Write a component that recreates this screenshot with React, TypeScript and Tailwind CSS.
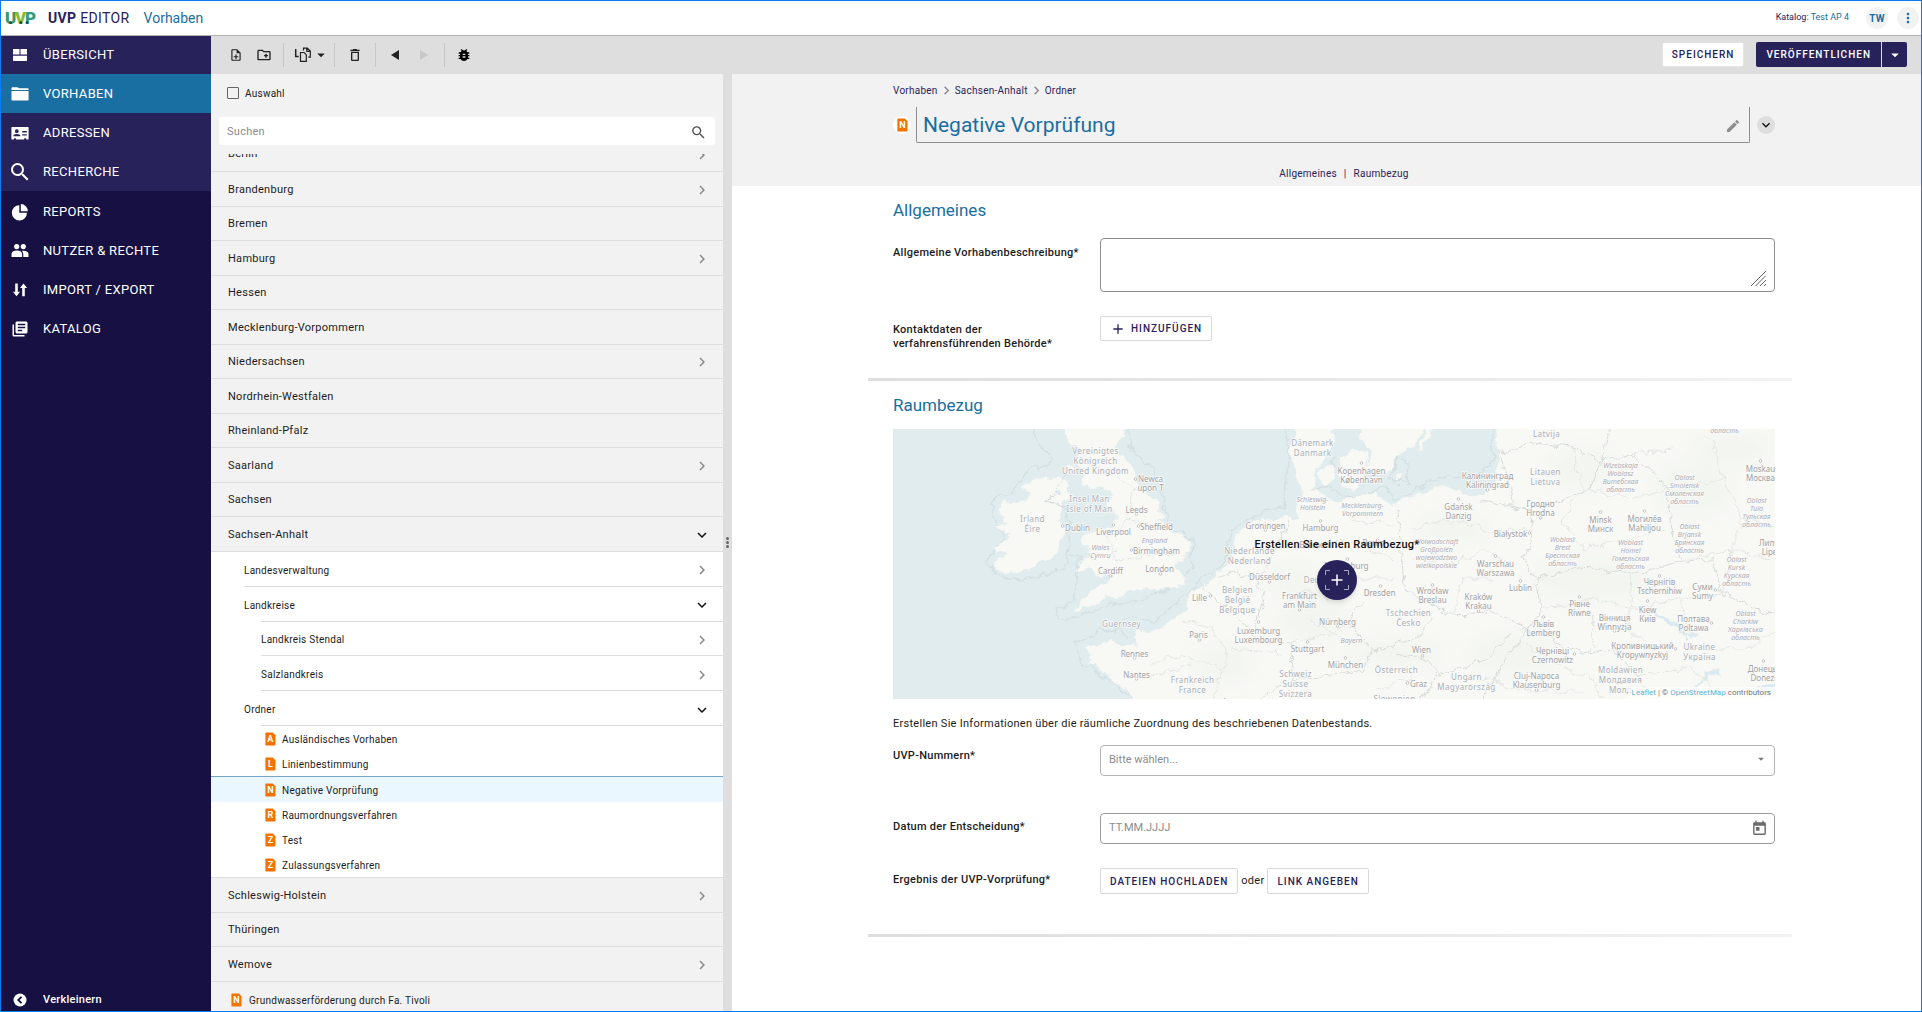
import React from "react";
import {
  MdOutlineNoteAdd,
  MdOutlineCreateNewFolder,
  MdOutlineDelete,
  MdBugReport,
  MdArrowDropDown,
  MdSearch,
  MdLibraryBooks,
  MdEdit,
  MdAdd,
  MdMoreVert,
  MdToday,
  MdChevronRight,
  MdExpandMore,
} from "react-icons/md";

type IconProps = { className?: string };

const DashboardIcon = ({ className }: IconProps) => (
  <svg viewBox="0 0 18 18" className={className} fill="currentColor" aria-hidden="true">
    <path d="M2 3h6.5v5.5H2zM9.500 3H16v5.500H9.500zM2 9.800h14V15H2z" />
  </svg>
);

const FolderIcon = ({ className }: IconProps) => (
  <svg viewBox="0 0 18 18" className={className} fill="currentColor" aria-hidden="true">
    <path d="M.5 4.500V3q0-.8.8-.8h5.200L8 3.300h9q.6 0 .6.8v.9H.5z" />
    <path d="M.5 5.900h17.100v8.800q0 .8-.8.8H1.300q-.8 0-.8-.8z" />
  </svg>
);

const ContactIcon = ({ className }: IconProps) => (
  <svg viewBox="0 0 18 18" className={className} fill="currentColor" aria-hidden="true">
    <path
      fillRule="evenodd"
      d="M1 3h16q.6 0 .6.6v11.300q0 .6-.6.600h-1.500l-.5-1.200h-1.500l-.5 1.200H5.200l-.5-1.200H3.200l-.5 1.200H1q-.6 0-.6-.6V3.600Q.4 3 1 3zm4.800 2.300a1.900 1.900 0 100 3.800 1.900 1.900 0 000-3.800zM2.400 12.300h6.900v-.6q0-1.700-3.500-1.700t-3.400 1.700zM11.200 7v1.400h4.600V7zm0 3.200v1.400h4.600v-1.400z"
    />
  </svg>
);

const PieIcon = ({ className }: IconProps) => (
  <svg viewBox="0 0 18 18" className={className} fill="currentColor" aria-hidden="true">
    <path d="M8.300 2.200v7.600h7.700A7.600 7.600 0 118.300 2.200z" />
    <path d="M9.800 1v7.200h7A7.200 7.200 0 009.800 1z" />
  </svg>
);

const PeopleIcon = ({ className }: IconProps) => (
  <svg viewBox="0 0 18 18" className={className} fill="currentColor" aria-hidden="true">
    <circle cx="5.700" cy="4.600" r="2.600" />
    <circle cx="12.300" cy="4.600" r="2.600" />
    <path d="M.5 15v-2.600Q.500 8.600 5.800 8.600t5.300 3.800V15z" />
    <path d="M12.300 15v-2.800q0-2-1.400-3.500 6.600-.5 6.600 3.600V15z" />
  </svg>
);

const TransferIcon = ({ className }: IconProps) => (
  <svg viewBox="0 0 18 18" className={className} fill="currentColor" aria-hidden="true">
    <path d="M4.200 2.500h2.600v8.300H9L5.500 15.300 2 10.800h2.200zM11.200 15.300h2.600V7h2.300l-3.600-4.500L9 7h2.200z" />
  </svg>
);

const CollapseIcon = ({ className }: IconProps) => (
  <svg viewBox="0 0 18 18" className={className} aria-hidden="true">
    <circle cx="9" cy="9" r="6.500" fill="#fff" />
    <path d="M10.500 5.800L7.300 9l3.200 3.200" fill="none" stroke="#171143" strokeWidth="1.800" />
  </svg>
);

const CopyIcon = ({ className }: IconProps) => (
  <svg viewBox="0 0 18 18" className={className} fill="none" stroke="#222" aria-hidden="true">
    <path d="M1.700 3v7.500h3" strokeWidth="1.500" />
    <path d="M6.500 6.500h3.600l2.200 2.200v6.600H6.500z" strokeWidth="1.200" />
    <path d="M9.500 4.500V2.200h3.800l3 2.800v6.200h-2M12.800 2.500v2.900h3" strokeWidth="1.200" />
  </svg>
);

const DocIcon = ({ letter }: { letter: string }) => (
  <svg viewBox="0 0 11 14" className="h-3.5 w-[11px] shrink-0" aria-hidden="true">
    <path d="M1 .5h6.800L10.500 3.300V12.600q0 .9-.9.900H1q-.6 0-.6-.6V1.100Q.4.500 1 .5z" fill="#f47200" />
    <text
      x="5.500"
      y="10"
      textAnchor="middle"
      className="font-['Roboto',sans-serif] text-[9px] font-bold"
      fill="#fff"
    >
      {letter}
    </text>
  </svg>
);

const Logo = () => (
  <svg viewBox="0 0 32 24" className="h-6 w-8 shrink-0" role="img" aria-label="UVP">
    <g className="font-['Roboto',sans-serif] text-[17px] font-black">
      <text x="0" y="18" fill="#3a9a6a">
        U
      </text>
      <text x="20" y="18" fill="#2f9d80">
        P
      </text>
      <text x="10" y="18" fill="#86bc25">
        V
      </text>
    </g>
    <circle cx="5.500" cy="16.600" r="1.400" fill="#16493f" />
    <circle cx="15.800" cy="16.600" r="1.400" fill="#16493f" />
    <circle cx="22" cy="16.600" r="1.300" fill="#16493f" />
  </svg>
);

type NavEntry = {
  label: string;
  Icon: React.ComponentType<IconProps>;
  active?: boolean;
  large?: boolean;
};

const mainNav: NavEntry[] = [
  { label: "ÜBERSICHT", Icon: DashboardIcon },
  { label: "VORHABEN", Icon: FolderIcon, active: true },
  { label: "ADRESSEN", Icon: ContactIcon },
  { label: "RECHERCHE", Icon: MdSearch, large: true },
];

const adminNav: NavEntry[] = [
  { label: "REPORTS", Icon: PieIcon },
  { label: "NUTZER & RECHTE", Icon: PeopleIcon },
  { label: "IMPORT / EXPORT", Icon: TransferIcon },
  { label: "KATALOG", Icon: MdLibraryBooks },
];

const NavItem = ({ label, Icon, active, large }: NavEntry) => (
  <a
    href="#"
    className={`flex h-[39px] items-center gap-3.5 pl-2.5 text-[13px] tracking-wide text-white ${
      active ? "bg-[#196ea2]" : ""
    }`}
  >
    <span className="flex w-[18px] justify-center">
      <Icon className={large ? "size-6 shrink-0" : "size-[18px] shrink-0"} />
    </span>
    {label}
  </a>
);

const Sidebar = () => (
  <nav className="flex w-[210px] shrink-0 flex-col bg-[#171143]">
    <div className="mb-px bg-[#28225b]">
      {mainNav.map((n) => (
        <NavItem key={n.label} {...n} />
      ))}
    </div>
    {adminNav.map((n) => (
      <NavItem key={n.label} {...n} />
    ))}
    <button className="mt-auto flex h-[22px] items-center gap-3.5 pl-2.5 text-[11px] font-medium tracking-wide text-white">
      <CollapseIcon className="size-[18px]" />
      Verkleinern
    </button>
  </nav>
);

const Separator = () => <span className="h-6 w-px bg-[#c6c6c6]" />;

const Toolbar = () => (
  <div className="flex h-[39px] shrink-0 items-center bg-[#dedede] pr-3.5">
    <div className="flex items-center text-[#222]">
      <button aria-label="Neues Dokument" className="ml-[18px]">
        <MdOutlineNoteAdd className="size-3.5" />
      </button>
      <button aria-label="Neuer Ordner" className="mr-[11px] ml-[13px]">
        <MdOutlineCreateNewFolder className="size-4" />
      </button>
      <Separator />
      <button aria-label="Kopieren" className="mr-1 ml-2.5 flex items-center">
        <CopyIcon className="size-[18px]" />
        <MdArrowDropDown className="size-[18px]" />
      </button>
      <Separator />
      <button aria-label="Löschen" className="mx-3">
        <MdOutlineDelete className="size-4" />
      </button>
      <Separator />
      <button aria-label="Zurück" className="ml-[15px]">
        <svg viewBox="0 0 8 10" className="h-2.5 w-2" fill="currentColor">
          <path d="M8 0v10L0 5z" />
        </svg>
      </button>
      <button aria-label="Vor" className="mr-4 ml-[21px]" disabled>
        <svg viewBox="0 0 8 10" className="h-2.5 w-2" fill="#c8c8c8">
          <path d="M0 0v10l8-5z" />
        </svg>
      </button>
      <Separator />
      <button aria-label="Fehler prüfen" className="ml-[11px]">
        <MdBugReport className="size-4 text-black" />
      </button>
    </div>
    <div className="ml-auto flex items-center gap-3 text-[10px] font-medium tracking-widest">
      <button className="flex h-[25px] items-center rounded-xs border border-[#e4e4e4] bg-white px-[9px] text-[#28225b]">
        SPEICHERN
      </button>
      <div className="flex gap-px">
        <button className="flex h-[25px] items-center rounded-l-xs bg-[#28225b] px-2.5 text-white">
          VERÖFFENTLICHEN
        </button>
        <button
          aria-label="Weitere Optionen"
          className="flex h-[25px] w-[25px] items-center justify-center rounded-r-xs bg-[#28225b] text-white"
        >
          <MdArrowDropDown className="size-[18px]" />
        </button>
      </div>
    </div>
  </div>
);

type State = "closed" | "open" | "leaf";

const Chevron = ({ state }: { state: State }) => {
  if (state === "closed") return <MdChevronRight className="size-[18px] text-[#8a8a8a]" />;
  if (state === "open") return <MdExpandMore className="size-[18px] text-[#111]" />;
  return null;
};

const states: [string, State][] = [
  ["Brandenburg", "closed"],
  ["Bremen", "leaf"],
  ["Hamburg", "closed"],
  ["Hessen", "leaf"],
  ["Mecklenburg-Vorpommern", "leaf"],
  ["Niedersachsen", "closed"],
  ["Nordrhein-Westfalen", "leaf"],
  ["Rheinland-Pfalz", "leaf"],
  ["Saarland", "closed"],
  ["Sachsen", "leaf"],
  ["Sachsen-Anhalt", "open"],
];

const folders: [string, State, string][] = [
  ["Landesverwaltung", "closed", "ml-[33px]"],
  ["Landkreise", "open", "ml-[33px]"],
  ["Landkreis Stendal", "closed", "ml-[50px]"],
  ["Salzlandkreis", "closed", "ml-[50px]"],
  ["Ordner", "open", "ml-[33px]"],
];

const documents: [string, string][] = [
  ["A", "Ausländisches Vorhaben"],
  ["L", "Linienbestimmung"],
  ["N", "Negative Vorprüfung"],
  ["R", "Raumordnungsverfahren"],
  ["Z", "Test"],
  ["Z", "Zulassungsverfahren"],
];

const laterStates: [string, State][] = [
  ["Schleswig-Holstein", "closed"],
  ["Thüringen", "leaf"],
  ["Wemove", "closed"],
];

const StateRow = ({ name, state }: { name: string; state: State }) => (
  <div className="flex items-center justify-between border-b border-[#dedede] bg-[#f2f2f2] pt-0.5 pr-3 pl-[17px] text-[11px] tracking-wide">
    {name}
    <Chevron state={state} />
  </div>
);

const Tree = () => (
  <div className="mt-[9px] min-h-0 flex-1 overflow-hidden text-[#1c1c1c]">
    <div className="flex h-[18px] items-end overflow-hidden border-b border-[#dedede]">
      <div className="flex h-[35px] flex-1 items-center justify-between pt-0.5 pr-3 pl-[17px] text-[11px] tracking-wide">
        Berlin
        <Chevron state="closed" />
      </div>
    </div>
    <div className="grid h-[380px] auto-rows-fr">
      {states.map(([name, state]) => (
        <StateRow key={name} name={name} state={state} />
      ))}
    </div>
    <div className="bg-white text-[10px] tracking-wide">
      <div className="grid h-[174px] auto-rows-fr">
        {folders.map(([name, state, indent]) => (
          <div key={name} className={`relative flex items-center justify-between pt-0.5 pr-3 ${indent}`}>
            {name}
            <Chevron state={state} />
            <span
              className={`absolute right-0 bottom-0 h-px bg-[#dedede] ${
                state === "open" ? "left-[17px]" : "left-0"
              }`}
            />
          </div>
        ))}
      </div>
      {documents.map(([letter, name], i) => (
        <a
          key={name}
          href="#"
          className={`flex items-center gap-1.5 pt-px pl-[54px] ${
            i === 2 ? "h-[26px] border-t border-[#74a5c6] bg-[#ebf7fe]" : "h-[25px]"
          }`}
        >
          <DocIcon letter={letter} />
          {name}
        </a>
      ))}
    </div>
    <div className="grid h-[105px] auto-rows-fr border-t border-[#dedede]">
      {laterStates.map(([name, state]) => (
        <StateRow key={name} name={name} state={state} />
      ))}
    </div>
    <a href="#" className="flex h-9 items-center gap-[7px] pl-5 text-[10px] tracking-wide">
      <DocIcon letter="N" />
      Grundwasserförderung durch Fa. Tivoli
    </a>
  </div>
);

const TreePanel = () => (
  <div className="flex w-[512px] shrink-0 flex-col bg-[#f2f2f2]">
    <label className="mt-[11px] ml-4 flex h-4 items-center gap-1.5 text-[10px] tracking-wide text-[#1c1c1c]">
      <input
        type="checkbox"
        className="size-3 appearance-none rounded-[1px] border border-[#666] bg-transparent"
      />
      Auswahl
    </label>
    <div className="mx-2 mt-4 flex h-7 shrink-0 items-center rounded-[3px] bg-white pt-0.5 pr-2 pl-2">
      <input
        type="text"
        aria-label="Suchen"
        placeholder="Suchen"
        className="min-w-0 flex-1 text-[11px] tracking-wide outline-none placeholder:text-[#8c8c8c]"
      />
      <MdSearch className="size-[17px] text-[#555]" />
    </div>
    <Tree />
  </div>
);

type Label = [kind: "c" | "t" | "r", x: number, y: number, ...lines: string[]];

const mapLabels: Label[] = [
  ["c", 203, 21, "Vereinigtes", "Königreich", "United Kingdom"],
  ["c", 197, 69, "Insel Man", "Isle of Man"],
  ["c", 140, 89, "Irland", "Éire"],
  ["c", 357, 121, "Niederlande", "Nederland"],
  ["c", 420, 13, "Dänemark", "Danmark"],
  ["c", 345, 160, "Belgien", "België", "Belgique"],
  ["c", 229, 194, "Guernsey"],
  ["c", 300, 250, "Frankreich", "France"],
  ["c", 403, 244, "Schweiz", "Suisse", "Svizzera"],
  ["c", 437, 150, "Deutschland"],
  ["c", 654, 4, "Latvija"],
  ["c", 653, 42, "Litauen", "Lietuva"],
  ["c", 516, 183, "Tschechien", "Česko"],
  ["c", 807, 217, "Ukraine", "Україна"],
  ["c", 504, 240, "Österreich"],
  ["c", 574, 247, "Ungarn", "Magyarország"],
  ["c", 502, 269, "Slowenien"],
  ["c", 728, 240, "Moldawien", "Молдавия", "Молд"],
  ["t", 258, 49, "Newca", "upon T"],
  ["t", 244, 80, "Leeds"],
  ["t", 185, 98, "Dublin"],
  ["t", 221, 102, "Liverpool"],
  ["t", 264, 97, "Sheffield"],
  ["t", 264, 121, "Birmingham"],
  ["t", 218, 141, "Cardiff"],
  ["t", 267, 139, "London"],
  ["t", 307, 168, "Lille"],
  ["t", 306, 205, "Paris"],
  ["t", 242, 224, "Rennes"],
  ["t", 244, 245, "Nantes"],
  ["t", 366, 201, "Luxemburg", "Luxembourg"],
  ["t", 469, 41, "Kopenhagen", "København"],
  ["t", 373, 96, "Groningen"],
  ["t", 428, 98, "Hamburg"],
  ["t", 422, 115, "Bremen"],
  ["t", 481, 113, "Berlin"],
  ["t", 377, 147, "Düsseldorf"],
  ["t", 454, 136, "Magdeburg"],
  ["t", 487, 163, "Dresden"],
  ["t", 407, 166, "Frankfurt", "am Main"],
  ["t", 445, 192, "Nürnberg"],
  ["t", 415, 219, "Stuttgart"],
  ["t", 453, 235, "München"],
  ["t", 595, 46, "Калининград", "Kaliningrad"],
  ["t", 566, 77, "Gdańsk", "Danzig"],
  ["t", 648, 74, "Гродно", "Hrodna"],
  ["t", 708, 90, "Minsk", "Минск"],
  ["t", 752, 89, "Могилёв", "Mahiljou"],
  ["t", 618, 104, "Białystok"],
  ["t", 868, 39, "Moskau", "Москва"],
  ["t", 603, 134, "Warschau", "Warszawa"],
  ["t", 628, 158, "Lublin"],
  ["t", 540, 161, "Wrocław", "Breslau"],
  ["t", 586, 167, "Kraków", "Krakau"],
  ["t", 687, 174, "Рівне", "Riwne"],
  ["t", 651, 194, "Львів", "Lemberg"],
  ["t", 722, 188, "Вінниця", "Winnyzja"],
  ["t", 660, 221, "Чернівці", "Czernowitz"],
  ["t", 755, 180, "Kiew", "Київ"],
  ["t", 767, 152, "Чернігів", "Tschernihiw"],
  ["t", 810, 157, "Суми", "Sumy"],
  ["t", 801, 189, "Полтава", "Poltawa"],
  ["t", 750, 216, "Кропивницький", "Kropywnyzkyj"],
  ["t", 872, 239, "Донецьк", "Donezk"],
  ["t", 881, 113, "Липецк", "Lipezk"],
  ["t", 529, 220, "Wien"],
  ["t", 526, 254, "Graz"],
  ["t", 644, 246, "Cluj-Napoca", "Klausenburg"],
  ["r", 262, 110, "England"],
  ["r", 208, 117, "Wales", "Cymru"],
  ["r", 420, 69, "Schleswig-", "Holstein"],
  ["r", 470, 75, "Mecklenburg-", "Vorpommern"],
  ["r", 459, 210, "Bayern"],
  ["r", 344, 270, "Auvergne"],
  ["r", 728, 35, "Wizebskaja", "Woblasz", "Витебская", "область"],
  ["r", 792, 47, "Oblast", "Smolensk", "Смоленская", "область"],
  ["r", 864, 70, "Oblast", "Tula", "Тульская", "область"],
  ["r", 797, 96, "Oblast", "Brjansk", "Брянская", "область"],
  ["r", 670, 109, "Woblast", "Brest", "Брестская", "область"],
  ["r", 738, 112, "Woblast", "Homel", "Гомельская", "область"],
  ["r", 544, 111, "Woiwodschaft", "Großpolen", "województwo", "wielkopolskie"],
  ["r", 844, 129, "Oblast", "Kursk", "Курская", "область"],
  ["r", 853, 183, "Oblast", "Charkiw", "Харківська", "область"],
  ["r", 832, 0, "область"],
];

const labelClass = {
  c: "text-[8px] tracking-wider fill-[#aab0b6]",
  t: "text-[8px] fill-[#a2a2a2]",
  r: "text-[7px] italic fill-[#aeaeb4]",
};
const lineStep = { c: 10, t: 9, r: 8 };

const townDots: [number, number][] = [
  [243, 50], [244, 85], [170, 97], [221, 96], [246, 97], [239, 121], [218, 147], [268, 145],
  [318, 167], [307, 211], [242, 229], [244, 250], [366, 193], [469, 34], [373, 101], [428, 92],
  [377, 153], [488, 157], [407, 181], [445, 197], [415, 213], [453, 229], [455, 130], [595, 61],
  [566, 70], [648, 89], [708, 83], [752, 82], [637, 104], [868, 32], [603, 127], [628, 152],
  [540, 156], [586, 182], [687, 168], [651, 188], [722, 202], [682, 225], [755, 172], [767, 147],
  [823, 161], [819, 194], [783, 220], [871, 232], [530, 227], [515, 254], [644, 261],
];

const greens: [number, number, number, number][] = [
  [700, 150, 60, 22], [800, 60, 40, 26], [620, 225, 46, 20], [420, 190, 34, 24], [560, 100, 36, 16],
  [330, 235, 30, 20], [840, 20, 40, 16], [500, 225, 50, 14], [690, 40, 34, 20], [400, 150, 24, 16],
];

const EuropeMap = () => (
  <svg
    viewBox="0 0 883 270"
    preserveAspectRatio="xMidYMid slice"
    className="h-full w-full bg-[#e1ecee]"
    aria-hidden="true"
  >
    <defs>
      <filter id="coast" x="-5%" y="-5%" width="110%" height="110%">
        <feTurbulence type="fractalNoise" baseFrequency="0.09" numOctaves="4" seed="7" />
        <feDisplacementMap in="SourceGraphic" scale="11" xChannelSelector="R" yChannelSelector="G" />
      </filter>
      <filter id="soft" x="-40%" y="-40%" width="180%" height="180%">
        <feGaussianBlur stdDeviation="9" />
      </filter>
    </defs>
    <g filter="url(#coast)">
      <g transform="translate(-33 -59) scale(.3444 .3333)">
        <g fill="none" stroke="#d3dfe1" strokeWidth="4">
          <path d="M505 150L510 200L560 270L545 290L490 295L460 340L445 370L390 380L385 430L420 510L370 570L400 620L440 635L560 610L605 570L610 500L600 410" />
          <path d="M775 150L785 230L850 300L880 360L900 470L970 510L960 600L900 660L800 690L720 710L600 750L570 740L575 715L628 690L628 610L640 560L610 560" />
          <path d="M745 760L800 740L850 760L920 700L990 630L1060 580L1080 480L1150 440L1230 410L1245 330L1240 150M800 990L740 940L630 870L630 820L700 780L760 780L780 810" />
          <path d="M1380 260L1360 350L1440 390L1520 350L1560 390L1680 320L1760 330L1835 290L1838 150M1560 262L1540 330L1590 340L1600 280Z" />
        </g>
        <g fill="#f8f8f5">
          <path d="M590 150L770 150L765 205L735 235L765 262L790 285L800 320L812 355L850 385L870 410L882 440L862 450L880 470L925 495L955 505L957 545L935 575L915 585L945 622L942 640L905 655L860 662L800 660L770 672L745 690L720 680L690 700L650 715L618 725L650 690L680 655L720 640L738 618L700 620L675 600L625 605L640 580L672 560L668 535L645 520L640 495L690 480L735 470L745 440L720 410L735 375L700 350L670 355L645 340L655 300L620 270L635 235L605 215Z" />
          <path d="M545 317L575 325L608 345L618 385L590 405L578 440L600 470L585 510L575 550L545 570L500 590L455 605L410 610L385 590L425 550L395 535L440 500L395 470L425 455L405 415L420 395L470 395L500 375L475 350L500 325Z" />
          <path d="M820 1040L775 955L745 940L700 900L665 880L680 865L660 835L735 815L760 830L805 830L800 780L840 790L885 770L920 745L950 720L955 665L1010 640L1050 600L1085 560L1090 505L1110 475L1150 455L1240 440L1260 450L1280 435L1265 400L1290 385L1270 340L1265 290L1245 240L1262 200L1262 150L1370 150L1378 215L1350 260L1320 290L1325 340L1320 350L1345 375L1395 395L1450 380L1500 365L1530 400L1540 410L1626 370L1707 345L1744 365L1787 385L1825 360L1857 330L1852 240L1841 130L2760 130L2760 1040Z" />
          <path d="M1395 260L1430 245L1470 240L1480 290L1460 330L1430 365L1400 340L1390 300Z" />
          <path d="M1340 290L1370 285L1380 325L1355 350L1335 325Z" />
          <path d="M1445 130L1650 130L1615 230L1556 262L1545 300L1500 312L1475 300L1490 240L1455 215Z" />
          <path d="M1655 150L1668 160L1634 240L1626 235Z" />
          <path d="M1556 315L1576 312L1576 335L1560 332Z" />
          <path d="M600 280L625 290L620 310L600 300ZM650 400L665 395L660 412Z" />
        </g>
        <g fill="#dbe9f0">
          <path d="M2590 960L2680 932L2680 970L2620 978Z" />
          <path d="M2312 720L2325 735L2360 755L2420 790L2440 800L2425 805L2350 765L2310 735Z" />
          <path d="M2455 905L2500 900L2505 912L2465 915L2440 940L2430 960L2425 950Z" />
          <path d="M570 360l14 -4l6 14l-14 6z" />
        </g>
      </g>
    </g>
    <g filter="url(#soft)" fill="#e9f3e7" opacity="0.4">
      {greens.map(([cx, cy, rx, ry]) => (
        <ellipse key={`${cx}-${cy}`} cx={cx} cy={cy} rx={rx} ry={ry} />
      ))}
    </g>
    <g filter="url(#coast)" fill="none">
      <g stroke="#d5dbd7" strokeWidth="1">
        <path d="M305 153L322 170L340 182L352 192L362 210L398 214L400 250L380 262L360 280" />
        <path d="M325 150L345 142L362 150L372 165L362 200M395 92L385 118L372 140L362 150" />
        <path d="M504 78L508 120L512 160L535 172L560 186L600 184L635 200L650 180L644 150L632 130L640 105L636 80L588 72" />
        <path d="M470 172L455 196L480 222L498 218L520 210L540 190M480 222L470 242L440 246L400 250" />
        <path d="M505 225L535 232L545 246L590 232L620 205M545 246L530 270" />
        <path d="M606 24L640 14L680 18L710 32L698 58L668 72L650 76M606 24L616 50L620 76" />
        <path d="M640 150L690 138L740 144L760 140L790 132L780 100L774 60L740 24L710 32L716 0" />
        <path d="M790 132L820 130L830 165L860 178L884 185M635 200L690 224L720 220L745 246L760 270" />
        <path d="M634 200L610 236L590 270M420 60L440 58" />
        <path d="M175 45L160 66L150 70L180 82" />
      </g>
      <g stroke="#e3e6e2" strokeWidth="1">
        <path d="M290 190L320 200L336 226L320 270M340 220L390 224M260 235L290 225L330 240M250 250L300 236" />
        <path d="M400 120L440 112L470 118L500 130M410 160L440 170L460 150L500 150M420 190L450 210M398 214L440 206L455 196" />
        <path d="M520 100L560 90L600 104L640 100M520 130L560 136L590 120L620 140M560 186L570 150L600 150M460 90L500 95" />
        <path d="M680 18L690 60L670 90L690 120L740 110L770 100M690 60L740 70L774 60M700 180L700 220M740 144L735 200L770 230" />
        <path d="M650 180L700 170L740 180L790 170L830 165M790 170L795 220L850 220L884 205M740 246L800 240L830 270" />
        <path d="M774 60L830 50L850 90L884 100M830 50L820 10M790 132L840 120L850 90M780 20L740 24M830 165L840 120L884 130" />
        <path d="M630 215L670 240L700 250L710 270M590 250L640 262L690 262M480 260L520 250" />
        <path d="M220 40L240 60L235 90L215 110L225 130M235 90L270 100M215 130L280 125" />
      </g>
    </g>
    <g fill="#fff" stroke="#b8b8b8" strokeWidth="0.800">
      {townDots.map(([cx, cy]) => (
        <circle key={`${cx}-${cy}`} cx={cx} cy={cy} r="1.300" />
      ))}
    </g>
    <g
      textAnchor="middle"
      className="font-['Noto_Sans',sans-serif]"
      stroke="#fafafa"
      strokeWidth="1.500"
      strokeLinejoin="round"
      paintOrder="stroke"
    >
      {mapLabels.map(([kind, x, y, ...lines]) =>
        lines.map((line, i) => (
          <text key={`${x}-${y}-${i}`} x={x} y={y + 4 + i * lineStep[kind]} className={labelClass[kind]}>
            {line}
          </text>
        )),
      )}
    </g>
  </svg>
);

const MapBox = () => (
  <div className="relative mt-3.5 h-[270px] overflow-hidden">
    <EuropeMap />
    <div className="absolute inset-0 flex flex-col items-center pt-[108px] pl-1.5">
      <span className="text-[11px] leading-4 font-medium tracking-wide text-[#111]">
        Erstellen Sie einen Raumbezug*
      </span>
      <button
        aria-label="Raumbezug hinzufügen"
        className="mt-[7px] flex size-10 items-center justify-center rounded-full bg-[#28225b] shadow-md"
      >
        <svg viewBox="0 0 24 20" className="h-5 w-6" fill="none">
          <path d="M.5 5V.5H5M19 .5h4.500V5M23.500 15v4.500H19M5 19.500H.5V15" stroke="#a9a6bf" />
          <path d="M12 4.500v11M6.500 10h11" stroke="#fff" strokeWidth="1.500" />
        </svg>
      </button>
    </div>
    <div className="absolute right-0 bottom-0 bg-white/70 px-1 text-[8px] leading-3 text-[#777]">
      <a href="#" className="text-[#5fb3d3]">
        Leaflet
      </a>{" "}
      | ©{" "}
      <a href="#" className="text-[#5fb3d3]">
        OpenStreetMap
      </a>{" "}
      contributors
    </div>
  </div>
);

const Divider = () => <hr className="h-[3px] border-0 bg-linear-to-r from-[#dedede] to-[#f2f2f2]" />;

const fieldRow = "grid grid-cols-[207px_minmax(0,1fr)] items-start";
const fieldLabel = "text-[11px] leading-[14px] font-medium tracking-wide text-[#1c1c1c]";
const outlineButton =
  "flex items-center rounded-xs border border-[#d9d9d9] bg-white px-[9px] text-[10px] font-medium tracking-widest text-[#28225b]";

const FormHeader = () => (
  <div className="h-28 shrink-0 bg-[#f2f2f2] pl-[7px]">
    <div className="mx-auto max-w-[924px] pr-[17px] pl-[25px] text-[#28225b]">
      <div className="flex h-[33px] items-center text-[10px] tracking-wide">
        <a href="#">Vorhaben</a>
        <MdChevronRight className="size-[17px] text-[#8a8a8a]" />
        <a href="#">Sachsen-Anhalt</a>
        <MdChevronRight className="size-[17px] text-[#8a8a8a]" />
        <a href="#">Ordner</a>
      </div>
      <div className="flex h-9 items-center">
        <span className="flex size-[18px] items-center justify-center rounded-full bg-white">
          <DocIcon letter="N" />
        </span>
        <div className="ml-[5px] flex h-9 flex-1 items-center rounded-b-xs border border-t-0 border-[#8e8e8e] pt-0.5 pr-2 pl-1.5">
          <input
            aria-label="Titel"
            defaultValue="Negative Vorprüfung"
            className="min-w-0 flex-1 text-[21px] text-[#196ea2] outline-none"
          />
          <MdEdit className="size-4 text-[#8e8e8e]" />
        </div>
        <button
          aria-label="Details anzeigen"
          className="ml-[7px] flex size-[18px] items-center justify-center rounded-full bg-[#dedede] text-[#111]"
        >
          <MdExpandMore className="size-4" />
        </button>
      </div>
      <div className="mt-[23px] flex justify-center gap-[7px] pl-5 text-[10px] leading-4 tracking-wide">
        <a href="#">Allgemeines</a>
        <span>|</span>
        <a href="#">Raumbezug</a>
      </div>
    </div>
  </div>
);

const Form = () => (
  <div className="min-h-0 flex-1 overflow-hidden pl-[7px]">
    <div className="mx-auto max-w-[924px]">
      <section className="pt-3.5 pr-[17px] pl-[25px]">
        <h2 className="text-[17px] leading-5 text-[#196ea2]">Allgemeines</h2>
        <div className={`mt-[18px] ${fieldRow}`}>
          <label htmlFor="beschreibung" className={`mt-2 ${fieldLabel}`}>
            Allgemeine Vorhabenbeschreibung*
          </label>
          <div className="relative">
            <textarea
              id="beschreibung"
              className="block h-[54px] w-full resize-none rounded-sm border border-[#8e8e8e] p-2 text-[11px] outline-none"
            />
            <svg
              viewBox="0 0 15 15"
              className="absolute right-[9px] bottom-1.5 size-[15px]"
              stroke="#666"
              aria-hidden="true"
            >
              <path d="M0 15L15 0M4.500 15L15 4.500M9 15l6-6M13 15l2-2" />
            </svg>
          </div>
        </div>
        <div className={`mt-6 ${fieldRow}`}>
          <span className={`mt-[7px] ${fieldLabel}`}>
            Kontaktdaten der
            <br />
            verfahrensführenden Behörde*
          </span>
          <div className="flex">
            <button className={`h-[25px] gap-[5px] ${outlineButton}`}>
              <MdAdd className="size-4" />
              HINZUFÜGEN
            </button>
          </div>
        </div>
      </section>
      <div className="mt-[27px]">
        <Divider />
      </div>
      <section className="pt-3.5 pr-[17px] pl-[25px]">
        <h2 className="text-[17px] leading-5 text-[#196ea2]">Raumbezug</h2>
        <MapBox />
        <p className="mt-[17px] text-[11px] leading-4 tracking-wide text-[#1c1c1c]">
          Erstellen Sie Informationen über die räumliche Zuordnung des beschriebenen Datenbestands.
        </p>
        <div className={`mt-[13px] ${fieldRow}`}>
          <label htmlFor="nummern" className={`mt-1 ${fieldLabel}`}>
            UVP-Nummern*
          </label>
          <div className="relative">
            <select
              id="nummern"
              className="block h-[31px] w-full appearance-none rounded-sm border border-[#b4b4b4] bg-white px-2 text-[11px] text-[#8c8c8c] outline-none"
            >
              <option>Bitte wählen...</option>
            </select>
            <MdArrowDropDown className="pointer-events-none absolute top-[7px] right-[7px] size-3.5 text-[#777]" />
          </div>
        </div>
        <div className={`mt-[37px] ${fieldRow}`}>
          <label htmlFor="datum" className={`mt-[7px] ${fieldLabel}`}>
            Datum der Entscheidung*
          </label>
          <div className="flex h-[31px] items-center rounded-sm border border-[#9c9c9c] pr-1.5 pl-2">
            <input
              id="datum"
              placeholder="TT.MM.JJJJ"
              className="min-w-0 flex-1 text-[11px] outline-none placeholder:text-[#8c8c8c]"
            />
            <button aria-label="Kalender öffnen">
              <MdToday className="size-[17px] text-[#6b6b6b]" />
            </button>
          </div>
        </div>
        <div className={`mt-6 ${fieldRow}`}>
          <span className={`mt-[5px] ${fieldLabel}`}>Ergebnis der UVP-Vorprüfung*</span>
          <div className="flex items-center gap-[3px] text-[11px] tracking-wide text-[#1c1c1c]">
            <button className={`h-[26px] ${outlineButton}`}>DATEIEN HOCHLADEN</button>
            oder
            <button className={`h-[26px] ${outlineButton}`}>LINK ANGEBEN</button>
          </div>
        </div>
      </section>
      <div className="mt-10">
        <Divider />
      </div>
    </div>
  </div>
);

export default function App() {
  return (
    <div className="flex h-screen flex-col overflow-hidden border border-[#0a7cf0] bg-white font-['Roboto',sans-serif]">
      <header className="relative z-10 flex h-[34px] shrink-0 items-center bg-white pr-0.5 pl-1 shadow-[0_1px_0_#b2b2b2]">
        <Logo />
        <span className="ml-[11px] text-sm tracking-wide text-[#28225b]">
          <b className="font-bold">UVP</b> EDITOR
        </span>
        <h1 className="ml-3.5 text-sm text-[#196ea2]">Vorhaben</h1>
        <span className="ml-auto text-[9px] text-[#28225b]">
          Katalog: <span className="text-[#196ea2]">Test AP 4</span>
        </span>
        <button className="ml-[17px] flex size-[22px] items-center justify-center rounded-full bg-[#f2f2f2] text-[10px] font-bold tracking-wide text-[#196ea2]">
          TW
        </button>
        <button
          aria-label="Menü"
          className="ml-[9px] flex size-[22px] items-center justify-center rounded-full bg-[#f2f2f2] text-[#196ea2]"
        >
          <MdMoreVert className="size-4" />
        </button>
      </header>
      <div className="flex min-h-0 flex-1">
        <Sidebar />
        <div className="flex min-w-0 flex-1 flex-col">
          <Toolbar />
          <div className="flex min-h-0 flex-1">
            <TreePanel />
            <div className="flex w-[9px] shrink-0 flex-col items-center justify-center gap-px bg-[#dedede]">
              <span className="size-[3px] rounded-full bg-[#666]" />
              <span className="size-[3px] rounded-full bg-[#666]" />
              <span className="size-[3px] rounded-full bg-[#666]" />
            </div>
            <main className="flex min-w-0 flex-1 flex-col">
              <FormHeader />
              <Form />
            </main>
          </div>
        </div>
      </div>
    </div>
  );
}
